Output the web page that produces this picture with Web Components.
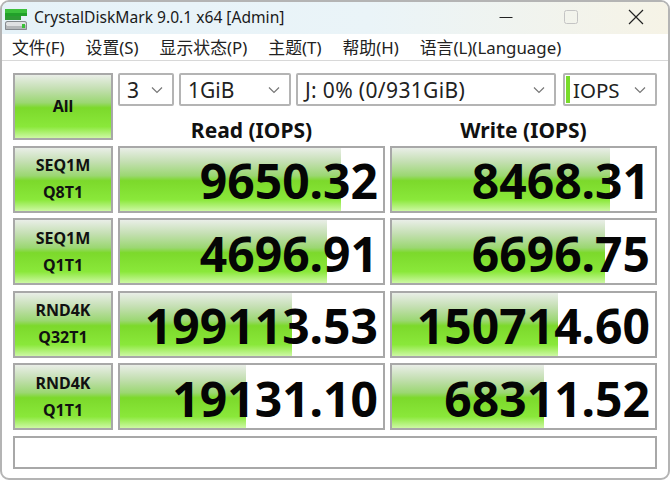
<!DOCTYPE html>
<html>
<head>
<meta charset="utf-8">
<style>
  html, body { margin: 0; height: 100%; background: #fff; overflow: hidden; }
  body { font-family: "Noto Sans", "Noto Sans CJK SC", sans-serif; color: #111; }
</style>
</head>
<body>
<cdm-window>
  <cdm-titlebar slot="title">CrystalDiskMark 9.0.1 x64 [Admin]</cdm-titlebar>
  <cdm-menu slot="menu" items="文件(F)|设置(S)|显示状态(P)|主题(T)|帮助(H)|语言(L)(Language)"></cdm-menu>
  <cdm-button all>All</cdm-button>
  <cdm-toolbar>
    <cdm-select style="width:56px">3</cdm-select>
    <cdm-select style="width:112px">1GiB</cdm-select>
    <cdm-select style="width:260px;letter-spacing:.35px">J: 0% (0/931GiB)</cdm-select>
    <cdm-select style="width:94px;margin-left:2px" mark>IOPS</cdm-select>
  </cdm-toolbar>
  <cdm-head>Read (IOPS)</cdm-head>
  <cdm-head>Write (IOPS)</cdm-head>

  <cdm-button>SEQ1M<br>Q8T1</cdm-button>
  <cdm-bar fill="221">9650.32</cdm-bar>
  <cdm-bar fill="218">8468.31</cdm-bar>

  <cdm-button>SEQ1M<br>Q1T1</cdm-button>
  <cdm-bar fill="207">4696.91</cdm-bar>
  <cdm-bar fill="213">6696.75</cdm-bar>

  <cdm-button>RND4K<br>Q32T1</cdm-button>
  <cdm-bar fill="172">199113.53</cdm-bar>
  <cdm-bar fill="166">150714.60</cdm-bar>

  <cdm-button>RND4K<br>Q1T1</cdm-button>
  <cdm-bar fill="126">19131.10</cdm-bar>
  <cdm-bar fill="152">68311.52</cdm-bar>

  <cdm-status></cdm-status>
</cdm-window>

<script>
const GREEN = "linear-gradient(to bottom, #e9eee7 0%, #c4dfb2 22%, #9bd772 44%, #7cd92b 52%, #8ae83a 82%, #cdf8a4 100%)";

function define(name, css, html) {
  customElements.define(name, class extends HTMLElement {
    constructor() {
      super();
      this.attachShadow({ mode: "open" });
      this.shadowRoot.innerHTML = `<style>${css}</style>${html}`;
    }
  });
}

define("cdm-window", `
  :host {
    display: flex; flex-direction: column; box-sizing: border-box;
    width: 670px; height: 480px;
    border: 2px solid #b4b4b4; border-radius: 9px; overflow: hidden; background: #fff;
  }
  .grid {
    display: grid;
    grid-template-columns: 100px 267px 267px;
    grid-template-rows: 33px 28.5px 67px 67px 67px 67px 33px;
    column-gap: 5px; row-gap: 5.5px;
    padding: 12px 0 0 11px;
  }
`, `
  <slot name="title"></slot>
  <slot name="menu"></slot>
  <div class="grid"><slot></slot></div>
`);

define("cdm-titlebar", `
  :host {
    display: flex; align-items: center; height: 32px;
    background: linear-gradient(to right, #e6f2f8 0%, #eaf4f8 55%, #f6f3e6 100%);
    font-size: 15.6px; color: #1a1a1a;
  }
  .logo { width: 24px; height: 24px; margin: 0 6px 0 2px; flex: none; }
  .text { flex: 1; white-space: nowrap; padding-bottom: 3px; }
  .ctl { width: 65px; height: 30px; padding-bottom: 2px; display: flex; align-items: center; justify-content: center; }
`, `
  <svg class="logo" viewBox="0 0 24 24">
    <rect x="1" y="3" width="22" height="4" fill="#3cc03c"/>
    <rect x="1" y="7" width="22" height="3" fill="#22a02a"/>
    <rect x="1" y="10" width="16" height="4" fill="#2e9a34"/>
    <rect x="1" y="15" width="22" height="10" rx="2.5" fill="#858a8e"/>
    <rect x="2" y="16" width="20" height="4" rx="1.5" fill="#dfe1e2"/>
    <rect x="2" y="20" width="20" height="3" fill="#b4b7b9"/>
    <rect x="18" y="18" width="3" height="4" fill="#38c038"/>
  </svg>
  <span class="text"><slot></slot></span>
  <div class="ctl"><svg width="16" height="16"><path d="M1.5 8.5h13" stroke="#222" stroke-width="1"/></svg></div>
  <div class="ctl"><svg width="16" height="16"><rect x="1.5" y="1.5" width="13" height="13" rx="2" fill="none" stroke="#c4c4c4"/></svg></div>
  <div class="ctl"><svg width="16" height="16"><path d="M1 1l14 14M15 1L1 15" stroke="#222" stroke-width="1.2"/></svg></div>
`);

customElements.define("cdm-menu", class extends HTMLElement {
  constructor() {
    super();
    this.attachShadow({ mode: "open" });
  }
  connectedCallback() {
    const items = this.getAttribute("items").split("|").map(t => `<span>${t}</span>`).join("");
    this.shadowRoot.innerHTML = `<style>
      :host {
        display: flex; gap: 21px; height: 27px; box-sizing: border-box;
        padding: 0 0 2px 10px; align-items: center;
        background: #fff; border-bottom: 1px solid #d8d8d8;
        font-size: 16.85px; color: #222; white-space: nowrap;
      }
    </style>${items}`;
  }
});

define("cdm-button", `
  :host {
    display: flex; align-items: center; justify-content: center; text-align: center;
    box-sizing: border-box; border: 2px solid #a8a8a8;
    background: ${GREEN};
    font-weight: 700; font-size: 16px; line-height: 27px; color: #111;
  }
  :host([all]) { grid-row: span 2; }
`, `<div><slot></slot></div>`);

define("cdm-toolbar", `
  :host { display: flex; gap: 5px; grid-column: span 2; }
`, `<slot></slot>`);

define("cdm-select", `
  :host {
    display: flex; align-items: center; box-sizing: border-box; height: 33px; flex: none;
    border: 2px solid #b4b4b4; border-radius: 2px; padding: 0 0 0 7px;
    background: #fff; font-size: 21px; color: #222; white-space: nowrap;
  }
  :host([mark]) { padding-left: 0; font-size: 20.5px; }
  .mark { display: none; width: 4px; height: 27px; background: #78dc2a; margin: 0 3px 0 1px; flex: none; }
  :host([mark]) .mark { display: block; }
  .t { flex: 1; }
  svg { margin: 0 9px 0 0; flex: none; }
`, `
  <span class="mark"></span><span class="t"><slot></slot></span>
  <svg width="12" height="8"><path d="M1 1.5l5 5 5-5" fill="none" stroke="#777" stroke-width="1.2"/></svg>
`);

define("cdm-head", `
  :host {
    display: flex; justify-content: center; align-items: flex-start; line-height: 37px;
    font-weight: 700; font-size: 21px; color: #111; white-space: nowrap;
  }
`, `<slot></slot>`);

customElements.define("cdm-bar", class extends HTMLElement {
  constructor() {
    super();
    this.attachShadow({ mode: "open" });
    this.shadowRoot.innerHTML = `<style>
      :host {
        display: flex; align-items: center; justify-content: flex-end; box-sizing: border-box;
        border: 2px solid #a8a8a8; padding: 4px 5px 0 0;
        background-color: #fff; background-image: ${GREEN}; background-repeat: no-repeat;
        font-weight: 700; font-size: 48px; line-height: 1; color: #050505; white-space: nowrap;
      }
    </style><slot></slot>`;
  }
  connectedCallback() {
    this.style.backgroundSize = this.getAttribute("fill") + "px 100%";
  }
});

define("cdm-status", `
  :host { display: block; grid-column: 1 / -1; box-sizing: border-box; border: 2px solid #a8a8a8; background: #fff; }
`, ``);
</script>
</body>
</html>
